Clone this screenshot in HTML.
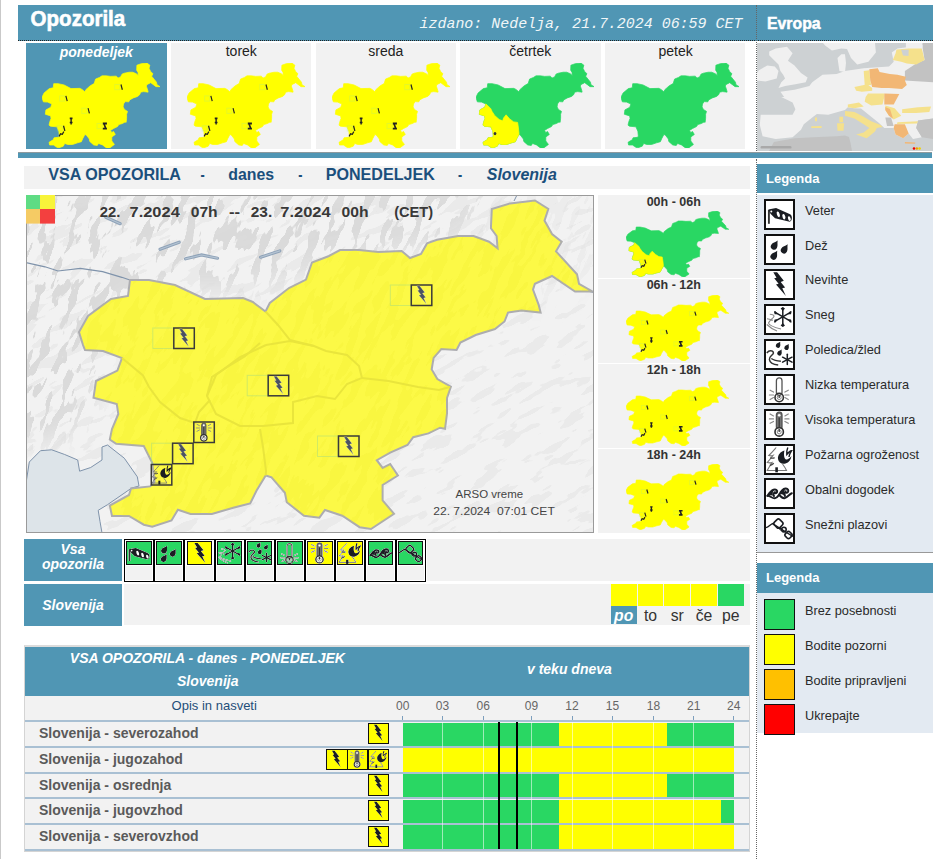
<!DOCTYPE html><html><head><meta charset="utf-8"><style>
*{margin:0;padding:0;box-sizing:border-box}
html,body{width:940px;height:859px;overflow:hidden;background:#fff;font-family:"Liberation Sans", sans-serif}
.abs{position:absolute}
.t{position:absolute;white-space:nowrap;line-height:1}
</style></head><body>
<svg width="0" height="0" style="position:absolute"><defs>
<symbol id="i_wind" viewBox="0 0 27 27"><path d="M2.9 9 L2.9 22.8" stroke="#333" stroke-width="1.9"/>
<path d="M2.3 8.6 L10.1 7.1 L23 12.8 C25.5 13.5 26.2 16 25.8 18 C25.4 20.2 24 20.9 22.6 20.6 L9 17.2 L4.5 12.7 Z" fill="#1a1d22"/>
<ellipse cx="12.3" cy="13.4" rx="1.4" ry="3" fill="#fff" transform="rotate(-18 12.3 13.4)"/>
<ellipse cx="17.9" cy="15.7" rx="1.4" ry="2.8" fill="#fff" transform="rotate(-18 17.9 15.7)"/>
<ellipse cx="23.3" cy="17.6" rx="1.3" ry="2.4" fill="#fff" transform="rotate(-18 23.3 17.4)"/>
<circle cx="5.3" cy="10.4" r="1" fill="#fff"/></symbol>
<symbol id="i_rain" viewBox="0 0 27 27"><path d="M0 -7 C1.12 -3.85 3.2 -2.88 3.2 0 A3.2 3.2 0 1 1 -3.2 0 C-3.2 -2.88 -1.12 -3.85 0 -7 Z" transform="translate(8 10.5) rotate(32)" fill="#1a1d22"/><path d="M0 -7 C1.12 -3.85 3.2 -2.88 3.2 0 A3.2 3.2 0 1 1 -3.2 0 C-3.2 -2.88 -1.12 -3.85 0 -7 Z" transform="translate(18 14.3) rotate(32)" fill="#1a1d22"/><path d="M0 -7 C1.12 -3.85 3.2 -2.88 3.2 0 A3.2 3.2 0 1 1 -3.2 0 C-3.2 -2.88 -1.12 -3.85 0 -7 Z" transform="translate(7.6 20.6) rotate(32)" fill="#1a1d22"/></symbol>
<symbol id="i_bolt" viewBox="0 0 27 27"><path d="M7.3 1.2 L11.1 1.2 L17.8 9.8 L14.7 10.9 L19.1 16.5 L16.3 17.2 L19.9 24.9 L10 13.6 L12.6 12.8 L8.2 7.3 L10.5 6.7 Z" fill="#1a1d22"/></symbol>
<symbol id="i_snow" viewBox="0 0 27 27"><g stroke="#1a1d22" stroke-width="1.5" stroke-linecap="round"><line x1="16.8" y1="2.2" x2="16.8" y2="19.8"/><line x1="9.2" y1="6.4" x2="24.4" y2="15.2"/><line x1="9.2" y1="15.2" x2="24.4" y2="6.4"/></g>
<g fill="#1a1d22"><path d="M14.6 2.6 L16.8 1 L19 2.6 L16.8 5 Z"/><path d="M14.6 19.4 L16.8 21 L19 19.4 L16.8 17 Z"/>
<path d="M8 5.2 L8.6 8.2 L11.6 8.3 L9.6 5.2 Z"/><path d="M25.6 5.2 L25 8.2 L22 8.3 L24 5.2 Z"/><path d="M8 16.4 L8.6 13.4 L11.6 13.3 L9.6 16.4 Z"/><path d="M25.6 16.4 L25 13.4 L22 13.3 L24 16.4 Z"/></g>
<path d="M3.8 8.3 C6 8.5 8 9.3 8 10.3 C7.5 12 4 14 2.5 17 C3 19.5 7 21 15 23 M1 12.8 C3 13 5 13.6 7 14.2 M0.8 18.5 C4 21.5 8 24 11 25" stroke="#8a8a8a" stroke-width="1.1" fill="none"/></symbol>
<symbol id="i_ice" viewBox="0 0 27 27"><path d="M0 -4.5 C0.77 -2.475 2.2 -1.98 2.2 0 A2.2 2.2 0 1 1 -2.2 0 C-2.2 -1.98 -0.77 -2.475 0 -4.5 Z" transform="translate(12 4.6) rotate(30)" fill="#1a1d22"/><path d="M0 -4.5 C0.77 -2.475 2.2 -1.98 2.2 0 A2.2 2.2 0 1 1 -2.2 0 C-2.2 -1.98 -0.77 -2.475 0 -4.5 Z" transform="translate(20.5 6.8) rotate(30)" fill="#1a1d22"/><path d="M0 -4.5 C0.77 -2.475 2.2 -1.98 2.2 0 A2.2 2.2 0 1 1 -2.2 0 C-2.2 -1.98 -0.77 -2.475 0 -4.5 Z" transform="translate(13.4 12.4) rotate(30)" fill="#1a1d22"/>
<path d="M0.8 12 C2 10.5 3.5 9.7 4.8 9.8 C7.5 10 8 12 6.8 13.2 C5 15 3 16 3.4 18.5 C3.8 22 8 23.6 12.2 24 M5.3 17.5 C8 19.5 11 20 14.9 20.2" stroke="#333" stroke-width="1.5" fill="none"/>
<g stroke="#1a1d22" stroke-width="1.5" stroke-linecap="round"><line x1="21.3" y1="13.3" x2="21.3" y2="23.6"/><line x1="16.6" y1="16.2" x2="26" y2="21.2"/><line x1="16.6" y1="21.2" x2="26" y2="16.2"/></g></symbol>
<symbol id="i_tlow" viewBox="0 0 27 27"><rect x="10.4" y="1.9" width="5.6" height="17.5" rx="2.8" fill="none" stroke="#555" stroke-width="1.3"/>
<circle cx="13.2" cy="21.5" r="4.2" fill="none" stroke="#333" stroke-width="1.6"/><circle cx="13.2" cy="21.5" r="2" fill="none" stroke="#888" stroke-width="1"/><rect x="12.6" y="19" width="1.2" height="3" fill="#333"/>
<g stroke="#8a8a8a" stroke-width="1.2" stroke-linecap="round"><line x1="4.1" y1="14.2" x2="7.5" y2="16.1"/><line x1="3.4" y1="19" x2="7.5" y2="19"/><line x1="4.1" y1="23.5" x2="7.5" y2="21.6"/><line x1="22.3" y1="14.2" x2="18.9" y2="16.1"/><line x1="23" y1="19" x2="18.9" y2="19"/><line x1="22.3" y1="23.5" x2="18.9" y2="21.6"/></g></symbol>
<symbol id="i_thigh" viewBox="0 0 27 27"><rect x="10.4" y="1.2" width="5.6" height="17.5" rx="2.8" fill="#777" stroke="#555" stroke-width="1.3"/><circle cx="13.2" cy="4.2" r="1.3" fill="#fff"/><rect x="12.6" y="6.5" width="1.2" height="12" fill="#333"/>
<circle cx="13.2" cy="20.9" r="4.2" fill="#fff" stroke="#333" stroke-width="1.6"/><circle cx="13.2" cy="20.9" r="2" fill="none" stroke="#888" stroke-width="1"/><rect x="12.6" y="18" width="1.2" height="3" fill="#333"/>
<g stroke="#8a8a8a" stroke-width="1.2" stroke-linecap="round"><line x1="4.1" y1="3" x2="7.5" y2="4.9"/><line x1="3.4" y1="7.9" x2="7.5" y2="7.9"/><line x1="4.1" y1="12.3" x2="7.5" y2="10.5"/><line x1="22.3" y1="3" x2="18.9" y2="4.9"/><line x1="23" y1="7.9" x2="18.9" y2="7.9"/><line x1="22.3" y1="12.3" x2="18.9" y2="10.5"/></g></symbol>
<symbol id="i_fire" viewBox="0 0 27 27"><path d="M10.2 1.5 C8 4 5.5 7 2.8 9.5 C4.5 10 6 10 7 9.5 C5 12.5 3 14.5 1.2 16.5 C3 17 4.6 17 6 16.5 C4.5 19 2.8 21.5 1.2 24.5 L9.8 24.5 M11 24.5 L20.5 24.5 C19.5 22 18 20 16.5 18" stroke="#777" stroke-width="1.1" fill="none"/>
<path d="M4 11.8 C5.5 12.3 7 12.5 8.6 11.6 M3.8 19.5 C5 19.2 6.5 18.5 7.8 17.2" stroke="#444" stroke-width="1.3" fill="none"/>
<rect x="9.3" y="21.3" width="2.6" height="5" fill="#1a1d22"/>
<path d="M18.5 4.5 C14.5 5.5 11.5 9 12 13 C12.5 16.5 16 18.5 19.5 17.5 C23 16.5 25 13.5 25.5 10 C23.5 12.5 21.5 14 20 13.5 C18 12.5 17.5 8 18.5 4.5 Z" fill="#1a1d22"/>
<path d="M21.8 1.5 C21 3.5 20.5 6 20.8 8.5 C22.5 6.5 24 5 25.5 4.8 C24 7 23 9 23 11" stroke="#1a1d22" stroke-width="1.4" fill="none"/></symbol>
<symbol id="i_coast" viewBox="0 0 27 27"><path d="M1.5 15.8 C3 13.5 4.8 10.8 7.5 9.8 C10 9 11.8 10.5 11 12.3 C10.4 13.5 8.8 13.4 8.7 12.3 C7.5 13 7 14.8 8 16 M13.2 14.6 C14.5 12 16.5 9 19.5 8.6 C22 8.3 23 10.8 21.8 12.2 C21 13 19.6 12.8 19.5 11.8 C18.4 12.8 18.2 14.6 19 16" stroke="#1a1d22" stroke-width="2" fill="none" stroke-linecap="round"/>
<path d="M1.5 15.8 C4 15.5 6 18.5 8.8 18.3 C11 18.1 12 16 13.2 14.6 C14.5 16.5 16 18.4 18.5 18.2 C21 18 23.5 14 25.8 13.2" stroke="#1a1d22" stroke-width="2" fill="none" stroke-linecap="round"/>
<path d="M2.5 15 C4 12.5 6 10.5 8 10.3 C7 11.5 6.5 13 6.8 15.5 Z M14 13.8 C15.5 11 17.5 9.3 19.5 9.2 C18.5 10.5 17.8 12.5 18 15 Z" fill="#1a1d22"/></symbol>
<symbol id="i_aval" viewBox="0 0 27 27"><path d="M0 12.7 C2.5 12 4.5 9.5 6.4 8.6 L26.9 21.5" stroke="#1a1d22" stroke-width="1.4" fill="none"/>
<rect x="8.6" y="4.8" width="7.6" height="7.6" rx="2" transform="rotate(45 12.4 8.6)" fill="none" stroke="#1a1d22" stroke-width="1.6"/>
<circle cx="17.9" cy="14.6" r="2.3" fill="none" stroke="#1a1d22" stroke-width="1.6"/>
<circle cx="14.7" cy="14.1" r="1" fill="none" stroke="#1a1d22" stroke-width="1"/>
<rect x="19.4" y="16.9" width="6.2" height="6.2" rx="2" transform="rotate(45 22.5 20)" fill="none" stroke="#1a1d22" stroke-width="1.6"/></symbol>
<symbol id="i_boltm" viewBox="0 0 27 27"><path d="M7.3 1.2 L11.1 1.2 L17.8 9.8 L14.7 10.9 L19.1 16.5 L16.3 17.2 L19.9 24.9 L10 13.6 L12.6 12.8 L8.2 7.3 L10.5 6.7 Z" fill="#4b5262" stroke="#fff" stroke-width="0.6" stroke-opacity="0.5"/></symbol>
</defs></svg>
<div class="abs" style="left:0;top:0;width:1px;height:859px;background:#c9c9c9"></div>
<div class="abs" style="left:18px;top:5px;width:915px;height:36px;background:#5096b4;border-bottom:1px dotted #222"></div>
<div class="abs" style="left:756px;top:5px;width:1px;height:146px;border-left:1px dotted #666"></div>
<div class="abs" style="left:756px;top:159px;width:1px;height:700px;border-left:1px dotted #666"></div>
<div class="abs" style="left:26px;top:43px;width:140.6px;height:106px;background:#5096b4"></div>
<div class="t" style="left:26px;top:45px;width:140.6px;text-align:center;font-size:14px;font-weight:bold;font-style:italic;color:#fff">ponedeljek</div>
<svg class="abs" style="left:42px;top:62.6px;width:118px;height:85.4px" viewBox="79 200.5 513.3 328.5" preserveAspectRatio="none"><path d="M130.0 280.0 L149.0 280.0 L175.0 285.0 L205.0 299.0 L243.0 298.0 L252.8 302.0 L265.5 311.5 L269.8 303.0 L289.0 288.0 L306.0 279.6 L312.0 262.5 L329.0 256.0 L340.0 250.0 L359.0 250.0 L378.0 252.0 L401.7 251.0 L410.0 258.0 L421.0 254.0 L427.0 243.4 L437.0 239.8 L458.3 236.0 L473.6 236.0 L489.0 241.7 L497.6 248.4 L496.6 236.0 L490.9 228.3 L491.8 209.0 L510.0 203.4 L534.9 200.5 L548.3 209.0 L544.5 220.6 L552.0 234.0 L561.7 241.7 L556.0 251.3 L577.0 274.3 L579.0 283.8 L592.3 291.5 L575.0 291.5 L552.0 276.0 L534.9 283.8 L533.0 289.6 L538.7 304.9 L540.6 312.6 L521.5 310.6 L508.0 312.6 L504.5 321.5 L495.0 329.0 L475.7 335.0 L460.4 342.6 L456.6 350.0 L441.3 349.0 L433.6 357.9 L431.7 369.4 L437.4 379.0 L450.9 386.6 L447.0 398.0 L447.0 413.4 L445.0 428.7 L440.0 427.7 L428.5 433.4 L413.2 437.2 L407.5 445.0 L390.2 452.6 L376.8 460.2 L382.6 467.9 L390.2 464.0 L397.9 475.5 L382.6 485.0 L382.6 500.4 L394.0 513.8 L371.0 529.0 L359.6 527.2 L342.3 515.7 L325.0 510.0 L319.4 517.7 L304.0 515.7 L286.8 502.3 L284.9 492.8 L271.5 477.4 L265.7 475.5 L256.6 490.6 L250.2 503.4 L233.2 507.7 L211.9 514.0 L190.6 514.0 L177.9 509.8 L171.5 520.4 L152.3 526.8 L143.8 524.7 L129.0 516.0 L112.0 516.0 L109.8 505.5 L129.0 495.0 L131.0 488.5 L150.2 486.4 L154.5 482.0 L152.3 463.0 L143.8 446.0 L116.2 443.8 L109.8 439.6 L112.0 429.0 L118.3 414.0 L116.8 404.0 L93.5 397.7 L96.0 381.0 L117.4 370.6 L122.0 358.0 L103.0 351.0 L85.0 350.0 L83.0 345.0 L79.0 332.0 L88.0 316.0 L111.0 299.0 L128.0 296.0 Z" fill="#ffff00" stroke="#ffff00" stroke-width="3"/><path d="M182.7 327 L188.7 347" stroke="#222" stroke-width="5.21739"/><rect x="155.7" y="327" width="22" height="20" fill="none" stroke="#a8e880" stroke-width="4" opacity="0.3"/><path d="M279.3 374.3 L285.3 394.3" stroke="#222" stroke-width="5.21739"/><rect x="252.3" y="374.3" width="22" height="20" fill="none" stroke="#a8e880" stroke-width="4" opacity="0.3"/><path d="M422.5 283.2 L428.5 303.2" stroke="#222" stroke-width="5.21739"/><rect x="395.5" y="283.2" width="22" height="20" fill="none" stroke="#a8e880" stroke-width="4" opacity="0.3"/><path d="M199.7 413.5 L211.7 413.5 M205.7 413.5 L205.7 437.5 M199.7 429.5 L211.7 429.5" stroke="#222" stroke-width="6.08696"/><path d="M172.6 442 L178.6 462" stroke="#222" stroke-width="5.21739"/><rect x="145.6" y="442" width="22" height="20" fill="none" stroke="#a8e880" stroke-width="4" opacity="0.3"/><path d="M153.6 482.8 L159.6 472.8 L167.6 474.8 L173.6 464.8" stroke="#222" fill="none" stroke-width="5.21739"/><path d="M343.4 433.2 L361.4 433.2 M343.4 453.2 L361.4 453.2 M348.4 433.2 L356.4 453.2" stroke="#222" stroke-width="6.95652"/><rect x="318.4" y="433.2" width="22" height="20" fill="none" stroke="#a8e880" stroke-width="4" opacity="0.3"/></svg>
<div class="abs" style="left:171px;top:43px;width:140.3px;height:106px;background:#f2f2f2"></div>
<div class="t" style="left:171px;top:44px;width:140.6px;text-align:center;font-size:14px;color:#222">torek</div>
<svg class="abs" style="left:187px;top:62.6px;width:118px;height:85.4px" viewBox="79 200.5 513.3 328.5" preserveAspectRatio="none"><path d="M130.0 280.0 L149.0 280.0 L175.0 285.0 L205.0 299.0 L243.0 298.0 L252.8 302.0 L265.5 311.5 L269.8 303.0 L289.0 288.0 L306.0 279.6 L312.0 262.5 L329.0 256.0 L340.0 250.0 L359.0 250.0 L378.0 252.0 L401.7 251.0 L410.0 258.0 L421.0 254.0 L427.0 243.4 L437.0 239.8 L458.3 236.0 L473.6 236.0 L489.0 241.7 L497.6 248.4 L496.6 236.0 L490.9 228.3 L491.8 209.0 L510.0 203.4 L534.9 200.5 L548.3 209.0 L544.5 220.6 L552.0 234.0 L561.7 241.7 L556.0 251.3 L577.0 274.3 L579.0 283.8 L592.3 291.5 L575.0 291.5 L552.0 276.0 L534.9 283.8 L533.0 289.6 L538.7 304.9 L540.6 312.6 L521.5 310.6 L508.0 312.6 L504.5 321.5 L495.0 329.0 L475.7 335.0 L460.4 342.6 L456.6 350.0 L441.3 349.0 L433.6 357.9 L431.7 369.4 L437.4 379.0 L450.9 386.6 L447.0 398.0 L447.0 413.4 L445.0 428.7 L440.0 427.7 L428.5 433.4 L413.2 437.2 L407.5 445.0 L390.2 452.6 L376.8 460.2 L382.6 467.9 L390.2 464.0 L397.9 475.5 L382.6 485.0 L382.6 500.4 L394.0 513.8 L371.0 529.0 L359.6 527.2 L342.3 515.7 L325.0 510.0 L319.4 517.7 L304.0 515.7 L286.8 502.3 L284.9 492.8 L271.5 477.4 L265.7 475.5 L256.6 490.6 L250.2 503.4 L233.2 507.7 L211.9 514.0 L190.6 514.0 L177.9 509.8 L171.5 520.4 L152.3 526.8 L143.8 524.7 L129.0 516.0 L112.0 516.0 L109.8 505.5 L129.0 495.0 L131.0 488.5 L150.2 486.4 L154.5 482.0 L152.3 463.0 L143.8 446.0 L116.2 443.8 L109.8 439.6 L112.0 429.0 L118.3 414.0 L116.8 404.0 L93.5 397.7 L96.0 381.0 L117.4 370.6 L122.0 358.0 L103.0 351.0 L85.0 350.0 L83.0 345.0 L79.0 332.0 L88.0 316.0 L111.0 299.0 L128.0 296.0 Z" fill="#ffff00" stroke="#ffff00" stroke-width="3"/><path d="M182.7 327 L188.7 347" stroke="#222" stroke-width="5.21739"/><rect x="155.7" y="327" width="22" height="20" fill="none" stroke="#a8e880" stroke-width="4" opacity="0.3"/><path d="M279.3 374.3 L285.3 394.3" stroke="#222" stroke-width="5.21739"/><rect x="252.3" y="374.3" width="22" height="20" fill="none" stroke="#a8e880" stroke-width="4" opacity="0.3"/><path d="M422.5 283.2 L428.5 303.2" stroke="#222" stroke-width="5.21739"/><rect x="395.5" y="283.2" width="22" height="20" fill="none" stroke="#a8e880" stroke-width="4" opacity="0.3"/><path d="M199.7 413.5 L211.7 413.5 M205.7 413.5 L205.7 437.5 M199.7 429.5 L211.7 429.5" stroke="#222" stroke-width="6.08696"/><path d="M172.6 442 L178.6 462" stroke="#222" stroke-width="5.21739"/><rect x="145.6" y="442" width="22" height="20" fill="none" stroke="#a8e880" stroke-width="4" opacity="0.3"/><path d="M153.6 482.8 L159.6 472.8 L167.6 474.8 L173.6 464.8" stroke="#222" fill="none" stroke-width="5.21739"/><path d="M343.4 433.2 L361.4 433.2 M343.4 453.2 L361.4 453.2 M348.4 433.2 L356.4 453.2" stroke="#222" stroke-width="6.95652"/><rect x="318.4" y="433.2" width="22" height="20" fill="none" stroke="#a8e880" stroke-width="4" opacity="0.3"/></svg>
<div class="abs" style="left:315.5px;top:43px;width:140.5px;height:106px;background:#f2f2f2"></div>
<div class="t" style="left:315.5px;top:44px;width:140.6px;text-align:center;font-size:14px;color:#222">sreda</div>
<svg class="abs" style="left:331.5px;top:62.6px;width:118px;height:85.4px" viewBox="79 200.5 513.3 328.5" preserveAspectRatio="none"><path d="M130.0 280.0 L149.0 280.0 L175.0 285.0 L205.0 299.0 L243.0 298.0 L252.8 302.0 L265.5 311.5 L269.8 303.0 L289.0 288.0 L306.0 279.6 L312.0 262.5 L329.0 256.0 L340.0 250.0 L359.0 250.0 L378.0 252.0 L401.7 251.0 L410.0 258.0 L421.0 254.0 L427.0 243.4 L437.0 239.8 L458.3 236.0 L473.6 236.0 L489.0 241.7 L497.6 248.4 L496.6 236.0 L490.9 228.3 L491.8 209.0 L510.0 203.4 L534.9 200.5 L548.3 209.0 L544.5 220.6 L552.0 234.0 L561.7 241.7 L556.0 251.3 L577.0 274.3 L579.0 283.8 L592.3 291.5 L575.0 291.5 L552.0 276.0 L534.9 283.8 L533.0 289.6 L538.7 304.9 L540.6 312.6 L521.5 310.6 L508.0 312.6 L504.5 321.5 L495.0 329.0 L475.7 335.0 L460.4 342.6 L456.6 350.0 L441.3 349.0 L433.6 357.9 L431.7 369.4 L437.4 379.0 L450.9 386.6 L447.0 398.0 L447.0 413.4 L445.0 428.7 L440.0 427.7 L428.5 433.4 L413.2 437.2 L407.5 445.0 L390.2 452.6 L376.8 460.2 L382.6 467.9 L390.2 464.0 L397.9 475.5 L382.6 485.0 L382.6 500.4 L394.0 513.8 L371.0 529.0 L359.6 527.2 L342.3 515.7 L325.0 510.0 L319.4 517.7 L304.0 515.7 L286.8 502.3 L284.9 492.8 L271.5 477.4 L265.7 475.5 L256.6 490.6 L250.2 503.4 L233.2 507.7 L211.9 514.0 L190.6 514.0 L177.9 509.8 L171.5 520.4 L152.3 526.8 L143.8 524.7 L129.0 516.0 L112.0 516.0 L109.8 505.5 L129.0 495.0 L131.0 488.5 L150.2 486.4 L154.5 482.0 L152.3 463.0 L143.8 446.0 L116.2 443.8 L109.8 439.6 L112.0 429.0 L118.3 414.0 L116.8 404.0 L93.5 397.7 L96.0 381.0 L117.4 370.6 L122.0 358.0 L103.0 351.0 L85.0 350.0 L83.0 345.0 L79.0 332.0 L88.0 316.0 L111.0 299.0 L128.0 296.0 Z" fill="#ffff00" stroke="#ffff00" stroke-width="3"/><path d="M182.7 327 L188.7 347" stroke="#222" stroke-width="5.21739"/><rect x="155.7" y="327" width="22" height="20" fill="none" stroke="#a8e880" stroke-width="4" opacity="0.3"/><path d="M279.3 374.3 L285.3 394.3" stroke="#222" stroke-width="5.21739"/><rect x="252.3" y="374.3" width="22" height="20" fill="none" stroke="#a8e880" stroke-width="4" opacity="0.3"/><path d="M422.5 283.2 L428.5 303.2" stroke="#222" stroke-width="5.21739"/><rect x="395.5" y="283.2" width="22" height="20" fill="none" stroke="#a8e880" stroke-width="4" opacity="0.3"/><path d="M199.7 413.5 L211.7 413.5 M205.7 413.5 L205.7 437.5 M199.7 429.5 L211.7 429.5" stroke="#222" stroke-width="6.08696"/><path d="M172.6 442 L178.6 462" stroke="#222" stroke-width="5.21739"/><rect x="145.6" y="442" width="22" height="20" fill="none" stroke="#a8e880" stroke-width="4" opacity="0.3"/><path d="M153.6 482.8 L159.6 472.8 L167.6 474.8 L173.6 464.8" stroke="#222" fill="none" stroke-width="5.21739"/><path d="M343.4 433.2 L361.4 433.2 M343.4 453.2 L361.4 453.2 M348.4 433.2 L356.4 453.2" stroke="#222" stroke-width="6.95652"/><rect x="318.4" y="433.2" width="22" height="20" fill="none" stroke="#a8e880" stroke-width="4" opacity="0.3"/></svg>
<div class="abs" style="left:460px;top:43px;width:140.7px;height:106px;background:#f2f2f2"></div>
<div class="t" style="left:460px;top:44px;width:140.6px;text-align:center;font-size:14px;color:#222">četrtek</div>
<svg class="abs" style="left:476px;top:62.6px;width:118px;height:85.4px" viewBox="79 200.5 513.3 328.5" preserveAspectRatio="none"><path d="M130.0 280.0 L149.0 280.0 L175.0 285.0 L205.0 299.0 L243.0 298.0 L252.8 302.0 L265.5 311.5 L269.8 303.0 L289.0 288.0 L306.0 279.6 L312.0 262.5 L329.0 256.0 L340.0 250.0 L359.0 250.0 L378.0 252.0 L401.7 251.0 L410.0 258.0 L421.0 254.0 L427.0 243.4 L437.0 239.8 L458.3 236.0 L473.6 236.0 L489.0 241.7 L497.6 248.4 L496.6 236.0 L490.9 228.3 L491.8 209.0 L510.0 203.4 L534.9 200.5 L548.3 209.0 L544.5 220.6 L552.0 234.0 L561.7 241.7 L556.0 251.3 L577.0 274.3 L579.0 283.8 L592.3 291.5 L575.0 291.5 L552.0 276.0 L534.9 283.8 L533.0 289.6 L538.7 304.9 L540.6 312.6 L521.5 310.6 L508.0 312.6 L504.5 321.5 L495.0 329.0 L475.7 335.0 L460.4 342.6 L456.6 350.0 L441.3 349.0 L433.6 357.9 L431.7 369.4 L437.4 379.0 L450.9 386.6 L447.0 398.0 L447.0 413.4 L445.0 428.7 L440.0 427.7 L428.5 433.4 L413.2 437.2 L407.5 445.0 L390.2 452.6 L376.8 460.2 L382.6 467.9 L390.2 464.0 L397.9 475.5 L382.6 485.0 L382.6 500.4 L394.0 513.8 L371.0 529.0 L359.6 527.2 L342.3 515.7 L325.0 510.0 L319.4 517.7 L304.0 515.7 L286.8 502.3 L284.9 492.8 L271.5 477.4 L265.7 475.5 L256.6 490.6 L250.2 503.4 L233.2 507.7 L211.9 514.0 L190.6 514.0 L177.9 509.8 L171.5 520.4 L152.3 526.8 L143.8 524.7 L129.0 516.0 L112.0 516.0 L109.8 505.5 L129.0 495.0 L131.0 488.5 L150.2 486.4 L154.5 482.0 L152.3 463.0 L143.8 446.0 L116.2 443.8 L109.8 439.6 L112.0 429.0 L118.3 414.0 L116.8 404.0 L93.5 397.7 L96.0 381.0 L117.4 370.6 L122.0 358.0 L103.0 351.0 L85.0 350.0 L83.0 345.0 L79.0 332.0 L88.0 316.0 L111.0 299.0 L128.0 296.0 Z" fill="#29d763" stroke="#29d763" stroke-width="3"/><path d="M122.0 358.0 L143.0 375.5 L149.0 387.0 L160.0 402.0 L180.0 418.0 L195.0 423.0 L199.0 412.0 L210.0 400.0 L225.5 415.7 L243.0 427.0 L260.0 429.0 L263.0 447.0 L266.0 471.0 L265.7 475.5 L256.6 490.6 L250.2 503.4 L233.2 507.7 L211.9 514.0 L190.6 514.0 L177.9 509.8 L171.5 520.4 L152.3 526.8 L143.8 524.7 L129.0 516.0 L112.0 516.0 L109.8 505.5 L129.0 495.0 L131.0 488.5 L150.2 486.4 L154.5 482.0 L152.3 463.0 L143.8 446.0 L116.2 443.8 L109.8 439.6 L112.0 429.0 L118.3 414.0 L116.8 404.0 L93.5 397.7 L96.0 381.0 L117.4 370.6 Z" fill="#ffff00" stroke="#ffff00" stroke-width="3"/><circle cx="161.7" cy="472" r="6" fill="#333"/></svg>
<div class="abs" style="left:605.3px;top:43px;width:139.8px;height:106px;background:#f2f2f2"></div>
<div class="t" style="left:605.3px;top:44px;width:140.6px;text-align:center;font-size:14px;color:#222">petek</div>
<svg class="abs" style="left:621.3px;top:62.6px;width:118px;height:85.4px" viewBox="79 200.5 513.3 328.5" preserveAspectRatio="none"><path d="M130.0 280.0 L149.0 280.0 L175.0 285.0 L205.0 299.0 L243.0 298.0 L252.8 302.0 L265.5 311.5 L269.8 303.0 L289.0 288.0 L306.0 279.6 L312.0 262.5 L329.0 256.0 L340.0 250.0 L359.0 250.0 L378.0 252.0 L401.7 251.0 L410.0 258.0 L421.0 254.0 L427.0 243.4 L437.0 239.8 L458.3 236.0 L473.6 236.0 L489.0 241.7 L497.6 248.4 L496.6 236.0 L490.9 228.3 L491.8 209.0 L510.0 203.4 L534.9 200.5 L548.3 209.0 L544.5 220.6 L552.0 234.0 L561.7 241.7 L556.0 251.3 L577.0 274.3 L579.0 283.8 L592.3 291.5 L575.0 291.5 L552.0 276.0 L534.9 283.8 L533.0 289.6 L538.7 304.9 L540.6 312.6 L521.5 310.6 L508.0 312.6 L504.5 321.5 L495.0 329.0 L475.7 335.0 L460.4 342.6 L456.6 350.0 L441.3 349.0 L433.6 357.9 L431.7 369.4 L437.4 379.0 L450.9 386.6 L447.0 398.0 L447.0 413.4 L445.0 428.7 L440.0 427.7 L428.5 433.4 L413.2 437.2 L407.5 445.0 L390.2 452.6 L376.8 460.2 L382.6 467.9 L390.2 464.0 L397.9 475.5 L382.6 485.0 L382.6 500.4 L394.0 513.8 L371.0 529.0 L359.6 527.2 L342.3 515.7 L325.0 510.0 L319.4 517.7 L304.0 515.7 L286.8 502.3 L284.9 492.8 L271.5 477.4 L265.7 475.5 L256.6 490.6 L250.2 503.4 L233.2 507.7 L211.9 514.0 L190.6 514.0 L177.9 509.8 L171.5 520.4 L152.3 526.8 L143.8 524.7 L129.0 516.0 L112.0 516.0 L109.8 505.5 L129.0 495.0 L131.0 488.5 L150.2 486.4 L154.5 482.0 L152.3 463.0 L143.8 446.0 L116.2 443.8 L109.8 439.6 L112.0 429.0 L118.3 414.0 L116.8 404.0 L93.5 397.7 L96.0 381.0 L117.4 370.6 L122.0 358.0 L103.0 351.0 L85.0 350.0 L83.0 345.0 L79.0 332.0 L88.0 316.0 L111.0 299.0 L128.0 296.0 Z" fill="#29d763" stroke="#29d763" stroke-width="3"/></svg>
<svg class="abs" style="left:757px;top:43px;width:176px;height:108px" viewBox="0 0 176 108"><defs><filter id="eblur" x="-5%" y="-5%" width="110%" height="110%"><feGaussianBlur stdDeviation="0.45"/></filter><clipPath id="eclip"><rect width="176" height="108"/></clipPath></defs><g clip-path="url(#eclip)"><g filter="url(#eblur)"><rect width="176" height="108" fill="#cdd1d3"/><path d="M66.0 0.0 L118.0 0.0 L118.9 9.4 L111.4 18.7 L100.2 21.5 L94.0 15.0 L90.0 6.0 L84.3 5.6 L74.9 7.5 L68.4 2.8 Z" fill="#f0f0f0"/><path d="M80.5 15.0 L84.3 11.2 L88.0 11.2 L89.0 20.0 L88.0 29.0 L82.4 28.1 Z" fill="#f0f0f0"/><path d="M148.9 0.0 L165.7 0.0 L164.8 5.6 L148.9 5.6 Z" fill="#f0f0f0"/><path d="M65.5 31.8 L79.6 30.9 L88.0 28.1 L106.7 25.3 L120.8 24.3 L132.0 23.4 L136.7 18.7 L134.8 9.4 L140.4 5.6 L153.5 3.7 L165.7 1.9 L176.0 0.0 L176.0 75.5 L161.0 77.4 L159.2 84.9 L164.8 94.3 L156.0 96.0 L151.7 90.5 L146.1 95.2 L138.6 91.5 L136.7 84.9 L127.3 84.9 L122.0 80.0 L112.0 72.0 L104.0 65.5 L97.4 65.2 L90.8 64.3 L88.0 67.1 L84.3 68.0 L71.2 71.8 L59.9 70.9 L56.2 73.7 L46.8 81.2 L44.0 86.8 L35.6 94.3 L18.7 96.1 L5.6 93.3 L2.8 82.1 L3.7 71.8 L26.2 71.8 L35.6 71.8 L38.4 66.2 L35.6 59.6 L24.3 54.0 L27.2 54.0 L23.4 48.7 L37.5 46.8 L52.4 43.1 L55.2 39.3 Z" fill="#f0f0f0"/><path d="M12.2 8.4 L18.7 5.6 L30.0 3.7 L35.6 10.3 L30.9 17.8 L37.5 22.5 L44.0 30.0 L50.6 34.6 L48.7 39.3 L38.4 41.2 L28.1 43.1 L21.5 44.9 L24.3 39.3 L28.1 35.6 L26.2 31.8 L23.4 28.1 L21.5 21.5 L16.9 16.9 L12.2 12.2 Z" fill="#f0f0f0"/><path d="M1.9 27.2 L10.3 22.5 L17.8 23.4 L21.5 28.1 L19.7 35.6 L8.4 38.4 L0.0 37.5 L0.0 30.0 Z" fill="#f0f0f0"/><path d="M12.0 108.0 L16.9 98.9 L37.5 95.2 L56.2 94.3 L79.6 93.3 L88.0 92.4 L92.0 94.0 L93.5 100.0 L95.0 108.0 Z" fill="#c2c2c2"/><path d="M165.7 0.0 L176.0 0.0 L176.0 39.3 L147.9 37.5 L147.9 28.1 L159.2 20.6 L167.6 16.9 L165.7 5.6 Z" fill="#c2c2c2"/><path d="M161.0 77.4 L176.0 75.5 L176.0 96.1 L164.8 94.3 L159.2 84.9 Z" fill="#c2c2c2"/><path d="M139.5 6.6 L151.7 5.6 L164.8 5.6 L167.6 16.9 L159.2 21.5 L149.8 20.6 L144.2 18.7 L135.8 16.9 L138.6 10.3 Z" fill="#f5e18c"/><path d="M144.2 6.8 L151.7 6.8 L151.5 13.1 L146.0 12.5 Z" fill="#cdd1d3"/><path d="M106.7 28.1 L112.3 27.2 L113.3 37.5 L114.2 42.1 L107.7 42.1 Z" fill="#f5e18c"/><path d="M112.3 26.2 L120.8 25.3 L122.6 29.0 L132.9 30.9 L140.4 31.8 L148.9 33.7 L147.9 37.5 L149.8 42.1 L145.1 45.9 L132.0 44.9 L124.5 44.9 L115.2 44.0 L113.3 37.5 Z" fill="#f2b774"/><path d="M97.4 44.0 L110.5 41.2 L115.2 44.9 L115.2 47.8 L104.9 48.7 L99.2 47.8 Z" fill="#f5e18c"/><path d="M108.6 54.0 L111.0 50.5 L127.3 50.5 L127.3 54.0 L125.5 61.5 L114.2 62.4 L107.7 58.7 Z" fill="#f5e18c"/><path d="M127.3 50.5 L142.3 51.0 L136.7 61.5 L127.3 61.5 Z" fill="#f2b774"/><path d="M90.8 61.5 L102.0 59.6 L106.7 63.4 L97.4 65.2 L90.8 64.3 Z" fill="#f5e18c"/><path d="M88.0 68.0 L97.4 69.0 L106.7 73.7 L114.2 78.3 L123.6 82.1 L125.5 84.0 L119.8 84.9 L118.0 88.6 L112.3 93.3 L109.5 95.2 L99.2 91.5 L106.7 89.6 L112.3 84.9 L106.7 81.2 L97.4 75.5 L88.0 72.7 Z" fill="#f5e18c"/><path d="M128.3 62.4 L137.6 65.2 L144.2 72.7 L136.7 76.5 L132.0 72.7 L128.3 67.1 Z" fill="#f5e18c"/><path d="M128.3 64.0 L133.0 66.0 L136.0 75.5 L132.0 72.7 L128.3 67.1 Z" fill="#f2b774"/><path d="M145.1 66.2 L161.0 64.3 L174.1 63.4 L172.3 69.0 L159.2 69.9 L145.1 69.9 Z" fill="#f5e18c"/><path d="M140.4 79.3 L161.0 78.3 L160.0 80.5 L140.0 81.0 Z" fill="#f5e18c"/><path d="M137.6 81.2 L147.9 81.2 L151.7 90.5 L146.1 95.2 L138.6 91.5 L136.7 84.9 Z" fill="#f2b774"/><path d="M128.3 74.6 L134.0 74.6 L136.7 83.0 L130.0 83.0 Z" fill="#c4c4c4"/><path d="M147.9 98.9 L158.2 99.5 L158.2 100.8 L147.9 100.5 Z" fill="#f2b774"/><path d="M82.4 73.7 L86.1 73.7 L86.1 79.3 L82.4 79.3 Z" fill="#f5e18c"/><path d="M80.0 80.2 L87.1 80.2 L86.5 87.7 L80.5 87.7 Z" fill="#f5e18c"/><path d="M54.3 83.3 L64.6 83.0 L64.6 84.9 L54.3 85.0 Z" fill="#f5e18c"/><path d="M58.0 74.6 L60.0 74.6 L60.0 78.3 L58.0 78.3 Z" fill="#f5e18c"/><rect x="3.5" y="103" width="31" height="2.6" rx="1.2" fill="#a9a9a9"/><circle cx="157" cy="105.5" r="1.3" fill="#e00"/><circle cx="159.8" cy="105.5" r="1.3" fill="#f0a000"/><circle cx="162.6" cy="105.5" r="1.3" fill="#f0d000"/></g></g></svg>
<div class="abs" style="left:18px;top:152px;width:914px;height:6px;background:#5096b4;border-top:1px solid #8e9a9e"></div>
<div class="abs" style="left:24px;top:165.5px;width:726px;height:23px;background:#f2f2f2"></div>
<svg class="abs" style="left:26px;top:195px;width:568px;height:338px" viewBox="26 195 568 338"><defs><filter id="terr1" color-interpolation-filters="sRGB" x="-50%" y="-50%" width="200%" height="200%"><feTurbulence type="fractalNoise" baseFrequency="0.11 0.035" numOctaves="3" seed="11"/><feColorMatrix type="matrix" values="0 0 0 0 0.855  0 0 0 0 0.855  0 0 0 0 0.855  0 0 0 -40 18.1"/></filter><filter id="terr2" color-interpolation-filters="sRGB" x="-50%" y="-50%" width="200%" height="200%"><feTurbulence type="fractalNoise" baseFrequency="0.03 0.11" numOctaves="3" seed="5"/><feColorMatrix type="matrix" values="0 0 0 0 0.87  0 0 0 0 0.87  0 0 0 0 0.87  0 0 0 -40 16.6"/></filter><filter id="mblur" x="-20%" y="-20%" width="140%" height="140%"><feGaussianBlur stdDeviation="14"/></filter><mask id="mk"><g filter="url(#mblur)"><path d="M0 180 L480 180 L470 230 L420 250 L340 262 L250 290 L150 292 L110 330 L90 420 L60 440 L0 450 Z" fill="#fff"/><path d="M440 180 L620 180 L620 260 L560 300 L470 300 Z" fill="#fff" fill-opacity="0.25"/></g></mask><clipPath id="mclip"><rect x="26" y="195" width="568" height="338"/></clipPath></defs><rect x="26" y="195" width="568" height="338" fill="#f2f2f2"/><g clip-path="url(#mclip)"><g mask="url(#mk)"><rect x="-100" y="0" width="900" height="700" filter="url(#terr1)" transform="rotate(22 310 364)"/></g><g opacity="0.35"><rect x="-100" y="0" width="900" height="700" filter="url(#terr2)" transform="rotate(-28 310 364)"/></g></g><path d="M26.5 480.0 L29.3 462.0 L40.5 450.7 L51.7 449.8 L64.7 454.5 L77.7 460.0 L79.6 471.2 L90.7 467.5 L102.0 460.0 L102.0 447.0 L107.5 445.0 L124.3 458.2 L137.3 476.8 L139.0 486.0 L131.7 488.0 L107.5 504.7 L98.2 510.3 L100.0 521.5 L102.0 533.0 L26.0 533.0 Z" fill="#dde4e9" stroke="#7f93ab" stroke-width="1"/><path d="M26 262.7 L45 266.8 L58 271 L80.3 268.4 L102.6 271.6 L121.8 277.3 L131.3 280.5" fill="none" stroke="#7f93ab" stroke-width="1.2"/><path d="M160.0 249.3 L179.2 242.2" fill="none" stroke="#8ea2b8" stroke-width="3.2" stroke-linecap="round"/><path d="M160.0 249.3 L179.2 242.2" fill="none" stroke="#b5c4d3" stroke-width="1.2" stroke-linecap="round"/><path d="M185.6 258.8 L201.5 255.0 L217.5 258.2" fill="none" stroke="#8ea2b8" stroke-width="3.2" stroke-linecap="round"/><path d="M185.6 258.8 L201.5 255.0 L217.5 258.2" fill="none" stroke="#b5c4d3" stroke-width="1.2" stroke-linecap="round"/><path d="M260.6 257.2 L279.8 250.9" fill="none" stroke="#8ea2b8" stroke-width="3.2" stroke-linecap="round"/><path d="M260.6 257.2 L279.8 250.9" fill="none" stroke="#b5c4d3" stroke-width="1.2" stroke-linecap="round"/><path d="M105.8 217.3 L120.2 223.7" fill="none" stroke="#8ea2b8" stroke-width="3.2" stroke-linecap="round"/><path d="M105.8 217.3 L120.2 223.7" fill="none" stroke="#b5c4d3" stroke-width="1.2" stroke-linecap="round"/><path d="M517 195 L514 201" fill="none" stroke="#7f93ab" stroke-width="1"/><path d="M587 291 L594 292.5" fill="none" stroke="#7f93ab" stroke-width="1"/><path d="M130.0 280.0 L149.0 280.0 L175.0 285.0 L205.0 299.0 L243.0 298.0 L252.8 302.0 L265.5 311.5 L269.8 303.0 L289.0 288.0 L306.0 279.6 L312.0 262.5 L329.0 256.0 L340.0 250.0 L359.0 250.0 L378.0 252.0 L401.7 251.0 L410.0 258.0 L421.0 254.0 L427.0 243.4 L437.0 239.8 L458.3 236.0 L473.6 236.0 L489.0 241.7 L497.6 248.4 L496.6 236.0 L490.9 228.3 L491.8 209.0 L510.0 203.4 L534.9 200.5 L548.3 209.0 L544.5 220.6 L552.0 234.0 L561.7 241.7 L556.0 251.3 L577.0 274.3 L579.0 283.8 L592.3 291.5 L575.0 291.5 L552.0 276.0 L534.9 283.8 L533.0 289.6 L538.7 304.9 L540.6 312.6 L521.5 310.6 L508.0 312.6 L504.5 321.5 L495.0 329.0 L475.7 335.0 L460.4 342.6 L456.6 350.0 L441.3 349.0 L433.6 357.9 L431.7 369.4 L437.4 379.0 L450.9 386.6 L447.0 398.0 L447.0 413.4 L445.0 428.7 L440.0 427.7 L428.5 433.4 L413.2 437.2 L407.5 445.0 L390.2 452.6 L376.8 460.2 L382.6 467.9 L390.2 464.0 L397.9 475.5 L382.6 485.0 L382.6 500.4 L394.0 513.8 L371.0 529.0 L359.6 527.2 L342.3 515.7 L325.0 510.0 L319.4 517.7 L304.0 515.7 L286.8 502.3 L284.9 492.8 L271.5 477.4 L265.7 475.5 L256.6 490.6 L250.2 503.4 L233.2 507.7 L211.9 514.0 L190.6 514.0 L177.9 509.8 L171.5 520.4 L152.3 526.8 L143.8 524.7 L129.0 516.0 L112.0 516.0 L109.8 505.5 L129.0 495.0 L131.0 488.5 L150.2 486.4 L154.5 482.0 L152.3 463.0 L143.8 446.0 L116.2 443.8 L109.8 439.6 L112.0 429.0 L118.3 414.0 L116.8 404.0 L93.5 397.7 L96.0 381.0 L117.4 370.6 L122.0 358.0 L103.0 351.0 L85.0 350.0 L83.0 345.0 L79.0 332.0 L88.0 316.0 L111.0 299.0 L128.0 296.0 Z" fill="#fcf946" stroke="#acacb0" stroke-width="2"/><defs><clipPath id="sclip"><path d="M130.0 280.0 L149.0 280.0 L175.0 285.0 L205.0 299.0 L243.0 298.0 L252.8 302.0 L265.5 311.5 L269.8 303.0 L289.0 288.0 L306.0 279.6 L312.0 262.5 L329.0 256.0 L340.0 250.0 L359.0 250.0 L378.0 252.0 L401.7 251.0 L410.0 258.0 L421.0 254.0 L427.0 243.4 L437.0 239.8 L458.3 236.0 L473.6 236.0 L489.0 241.7 L497.6 248.4 L496.6 236.0 L490.9 228.3 L491.8 209.0 L510.0 203.4 L534.9 200.5 L548.3 209.0 L544.5 220.6 L552.0 234.0 L561.7 241.7 L556.0 251.3 L577.0 274.3 L579.0 283.8 L592.3 291.5 L575.0 291.5 L552.0 276.0 L534.9 283.8 L533.0 289.6 L538.7 304.9 L540.6 312.6 L521.5 310.6 L508.0 312.6 L504.5 321.5 L495.0 329.0 L475.7 335.0 L460.4 342.6 L456.6 350.0 L441.3 349.0 L433.6 357.9 L431.7 369.4 L437.4 379.0 L450.9 386.6 L447.0 398.0 L447.0 413.4 L445.0 428.7 L440.0 427.7 L428.5 433.4 L413.2 437.2 L407.5 445.0 L390.2 452.6 L376.8 460.2 L382.6 467.9 L390.2 464.0 L397.9 475.5 L382.6 485.0 L382.6 500.4 L394.0 513.8 L371.0 529.0 L359.6 527.2 L342.3 515.7 L325.0 510.0 L319.4 517.7 L304.0 515.7 L286.8 502.3 L284.9 492.8 L271.5 477.4 L265.7 475.5 L256.6 490.6 L250.2 503.4 L233.2 507.7 L211.9 514.0 L190.6 514.0 L177.9 509.8 L171.5 520.4 L152.3 526.8 L143.8 524.7 L129.0 516.0 L112.0 516.0 L109.8 505.5 L129.0 495.0 L131.0 488.5 L150.2 486.4 L154.5 482.0 L152.3 463.0 L143.8 446.0 L116.2 443.8 L109.8 439.6 L112.0 429.0 L118.3 414.0 L116.8 404.0 L93.5 397.7 L96.0 381.0 L117.4 370.6 L122.0 358.0 L103.0 351.0 L85.0 350.0 L83.0 345.0 L79.0 332.0 L88.0 316.0 L111.0 299.0 L128.0 296.0 Z"/></clipPath><filter id="terr3" color-interpolation-filters="sRGB" x="-50%" y="-50%" width="200%" height="200%"><feTurbulence type="fractalNoise" baseFrequency="0.12 0.03" numOctaves="3" seed="21"/><feColorMatrix type="matrix" values="0 0 0 0 0.9  0 0 0 0 0.89  0 0 0 0 0.15  0 0 0 -40 19"/></filter></defs><g clip-path="url(#sclip)"><g opacity="0.15"><rect x="-100" y="0" width="900" height="700" filter="url(#terr3)" transform="rotate(30 310 364)"/></g></g><path d="M265.5 311.5 L278.0 325.0 L290.0 340.0 L314.0 346.0" fill="none" stroke="#e9e53c" stroke-width="2"/><path d="M266.0 345.0 L290.0 341.0 L314.0 346.0 L326.0 351.0 L347.0 355.0 L359.0 366.0 L362.0 378.0 L347.0 384.0 L335.0 399.0 L317.0 396.0 L293.0 402.0 L293.0 423.0 L263.0 426.0 L240.0 426.0 L216.0 414.0 L207.0 396.0 L216.0 375.0 L240.0 357.0 L266.0 345.0" fill="none" stroke="#e9e53c" stroke-width="2"/><path d="M362.0 378.0 L388.5 381.0 L418.0 387.0 L439.0 390.0 L450.0 387.0" fill="none" stroke="#e9e53c" stroke-width="2"/><path d="M122.0 358.0 L143.0 375.5 L149.0 387.0 L160.0 402.0 L180.0 418.0 L195.0 423.0 L199.0 412.0 L210.0 400.0" fill="none" stroke="#e9e53c" stroke-width="2"/><path d="M260.0 429.0 L263.0 447.0 L266.0 471.0 L265.7 475.5" fill="none" stroke="#e9e53c" stroke-width="2"/><path d="M207.0 396.0 L212.0 377.0 L229.0 366.0 L244.7 356.4 L260.0 343.0" fill="none" stroke="#e9e53c" stroke-width="2"/><rect x="26.5" y="195.5" width="567" height="337" fill="none" stroke="#9a9a9a" stroke-width="1"/><rect x="26" y="195" width="14" height="14" fill="#5fdc84"/><rect x="40" y="195" width="15" height="14" fill="#f8f43a"/><rect x="26" y="209" width="14" height="14.6" fill="#f5cb64"/><rect x="40" y="209" width="15" height="14.6" fill="#f3403f"/><rect x="152.8" y="328" width="20.5" height="20.5" fill="none" stroke="#a6dd80" stroke-width="0.9" stroke-opacity="0.55"/><rect x="173.8" y="328" width="20.5" height="20.5" fill="none" stroke="#3a3a3a" stroke-width="1.5"/><svg x="173.8" y="328" width="20.5" height="20.5" viewBox="0 0 27 27"><use href="#i_boltm"/></svg><rect x="390.3" y="285" width="20.5" height="20.5" fill="none" stroke="#a6dd80" stroke-width="0.9" stroke-opacity="0.55"/><rect x="411.3" y="285" width="20.5" height="20.5" fill="none" stroke="#3a3a3a" stroke-width="1.5"/><svg x="411.3" y="285" width="20.5" height="20.5" viewBox="0 0 27 27"><use href="#i_boltm"/></svg><rect x="247.2" y="375.3" width="20.5" height="20.5" fill="none" stroke="#a6dd80" stroke-width="0.9" stroke-opacity="0.55"/><rect x="268.2" y="375.3" width="20.5" height="20.5" fill="none" stroke="#3a3a3a" stroke-width="1.5"/><svg x="268.2" y="375.3" width="20.5" height="20.5" viewBox="0 0 27 27"><use href="#i_boltm"/></svg><rect x="317.5" y="436" width="20.5" height="20.5" fill="none" stroke="#a6dd80" stroke-width="0.9" stroke-opacity="0.55"/><rect x="338.5" y="436" width="20.5" height="20.5" fill="none" stroke="#3a3a3a" stroke-width="1.5"/><svg x="338.5" y="436" width="20.5" height="20.5" viewBox="0 0 27 27"><use href="#i_boltm"/></svg><rect x="193.8" y="422" width="20.5" height="20.5" fill="none" stroke="#3a3a3a" stroke-width="1.5"/><svg x="193.8" y="422" width="20.5" height="20.5" viewBox="0 0 27 27"><use href="#i_thigh"/></svg><rect x="151.6" y="443.2" width="20.5" height="20.5" fill="none" stroke="#a6dd80" stroke-width="0.9" stroke-opacity="0.55"/><rect x="172.6" y="443.2" width="20.5" height="20.5" fill="none" stroke="#3a3a3a" stroke-width="1.5"/><svg x="172.6" y="443.2" width="20.5" height="20.5" viewBox="0 0 27 27"><use href="#i_boltm"/></svg><rect x="151.3" y="464.5" width="20.5" height="20.5" fill="none" stroke="#3a3a3a" stroke-width="1.5"/><svg x="151.3" y="464.5" width="20.5" height="20.5" viewBox="0 0 27 27"><use href="#i_fire"/></svg></svg>
<div class="abs" style="left:597.5px;top:195px;width:152.5px;height:338px;background:#f2f2f2"></div>
<div class="t" style="left:597.5px;top:195.5px;width:152.5px;text-align:center;font-size:12.5px;font-weight:bold;color:#333">00h - 06h</div>
<svg class="abs" style="left:626px;top:210.6px;width:102.8px;height:66.1px" viewBox="79 200.5 513.3 328.5" preserveAspectRatio="none"><path d="M130.0 280.0 L149.0 280.0 L175.0 285.0 L205.0 299.0 L243.0 298.0 L252.8 302.0 L265.5 311.5 L269.8 303.0 L289.0 288.0 L306.0 279.6 L312.0 262.5 L329.0 256.0 L340.0 250.0 L359.0 250.0 L378.0 252.0 L401.7 251.0 L410.0 258.0 L421.0 254.0 L427.0 243.4 L437.0 239.8 L458.3 236.0 L473.6 236.0 L489.0 241.7 L497.6 248.4 L496.6 236.0 L490.9 228.3 L491.8 209.0 L510.0 203.4 L534.9 200.5 L548.3 209.0 L544.5 220.6 L552.0 234.0 L561.7 241.7 L556.0 251.3 L577.0 274.3 L579.0 283.8 L592.3 291.5 L575.0 291.5 L552.0 276.0 L534.9 283.8 L533.0 289.6 L538.7 304.9 L540.6 312.6 L521.5 310.6 L508.0 312.6 L504.5 321.5 L495.0 329.0 L475.7 335.0 L460.4 342.6 L456.6 350.0 L441.3 349.0 L433.6 357.9 L431.7 369.4 L437.4 379.0 L450.9 386.6 L447.0 398.0 L447.0 413.4 L445.0 428.7 L440.0 427.7 L428.5 433.4 L413.2 437.2 L407.5 445.0 L390.2 452.6 L376.8 460.2 L382.6 467.9 L390.2 464.0 L397.9 475.5 L382.6 485.0 L382.6 500.4 L394.0 513.8 L371.0 529.0 L359.6 527.2 L342.3 515.7 L325.0 510.0 L319.4 517.7 L304.0 515.7 L286.8 502.3 L284.9 492.8 L271.5 477.4 L265.7 475.5 L256.6 490.6 L250.2 503.4 L233.2 507.7 L211.9 514.0 L190.6 514.0 L177.9 509.8 L171.5 520.4 L152.3 526.8 L143.8 524.7 L129.0 516.0 L112.0 516.0 L109.8 505.5 L129.0 495.0 L131.0 488.5 L150.2 486.4 L154.5 482.0 L152.3 463.0 L143.8 446.0 L116.2 443.8 L109.8 439.6 L112.0 429.0 L118.3 414.0 L116.8 404.0 L93.5 397.7 L96.0 381.0 L117.4 370.6 L122.0 358.0 L103.0 351.0 L85.0 350.0 L83.0 345.0 L79.0 332.0 L88.0 316.0 L111.0 299.0 L128.0 296.0 Z" fill="#29d763" stroke="#29d763" stroke-width="3"/><path d="M122.0 358.0 L143.0 375.5 L149.0 387.0 L160.0 402.0 L180.0 418.0 L195.0 423.0 L199.0 412.0 L210.0 400.0 L225.5 415.7 L243.0 427.0 L260.0 429.0 L263.0 447.0 L266.0 471.0 L265.7 475.5 L256.6 490.6 L250.2 503.4 L233.2 507.7 L211.9 514.0 L190.6 514.0 L177.9 509.8 L171.5 520.4 L152.3 526.8 L143.8 524.7 L129.0 516.0 L112.0 516.0 L109.8 505.5 L129.0 495.0 L131.0 488.5 L150.2 486.4 L154.5 482.0 L152.3 463.0 L143.8 446.0 L116.2 443.8 L109.8 439.6 L112.0 429.0 L118.3 414.0 L116.8 404.0 L93.5 397.7 L96.0 381.0 L117.4 370.6 Z" fill="#ffff00" stroke="#ffff00" stroke-width="3"/><path d="M172.6 442 L178.6 462" stroke="#222" stroke-width="6"/><rect x="145.6" y="442" width="22" height="20" fill="none" stroke="#a8e880" stroke-width="4" opacity="0.3"/><path d="M153.6 482.8 L159.6 472.8 L167.6 474.8 L173.6 464.8" stroke="#222" fill="none" stroke-width="6"/></svg>
<div class="abs" style="left:597.5px;top:277.8px;width:152.5px;height:1.3px;background:#fff"></div>
<div class="t" style="left:597.5px;top:278.7px;width:152.5px;text-align:center;font-size:12.5px;font-weight:bold;color:#333">06h - 12h</div>
<svg class="abs" style="left:626px;top:295.2px;width:102.8px;height:66.1px" viewBox="79 200.5 513.3 328.5" preserveAspectRatio="none"><path d="M130.0 280.0 L149.0 280.0 L175.0 285.0 L205.0 299.0 L243.0 298.0 L252.8 302.0 L265.5 311.5 L269.8 303.0 L289.0 288.0 L306.0 279.6 L312.0 262.5 L329.0 256.0 L340.0 250.0 L359.0 250.0 L378.0 252.0 L401.7 251.0 L410.0 258.0 L421.0 254.0 L427.0 243.4 L437.0 239.8 L458.3 236.0 L473.6 236.0 L489.0 241.7 L497.6 248.4 L496.6 236.0 L490.9 228.3 L491.8 209.0 L510.0 203.4 L534.9 200.5 L548.3 209.0 L544.5 220.6 L552.0 234.0 L561.7 241.7 L556.0 251.3 L577.0 274.3 L579.0 283.8 L592.3 291.5 L575.0 291.5 L552.0 276.0 L534.9 283.8 L533.0 289.6 L538.7 304.9 L540.6 312.6 L521.5 310.6 L508.0 312.6 L504.5 321.5 L495.0 329.0 L475.7 335.0 L460.4 342.6 L456.6 350.0 L441.3 349.0 L433.6 357.9 L431.7 369.4 L437.4 379.0 L450.9 386.6 L447.0 398.0 L447.0 413.4 L445.0 428.7 L440.0 427.7 L428.5 433.4 L413.2 437.2 L407.5 445.0 L390.2 452.6 L376.8 460.2 L382.6 467.9 L390.2 464.0 L397.9 475.5 L382.6 485.0 L382.6 500.4 L394.0 513.8 L371.0 529.0 L359.6 527.2 L342.3 515.7 L325.0 510.0 L319.4 517.7 L304.0 515.7 L286.8 502.3 L284.9 492.8 L271.5 477.4 L265.7 475.5 L256.6 490.6 L250.2 503.4 L233.2 507.7 L211.9 514.0 L190.6 514.0 L177.9 509.8 L171.5 520.4 L152.3 526.8 L143.8 524.7 L129.0 516.0 L112.0 516.0 L109.8 505.5 L129.0 495.0 L131.0 488.5 L150.2 486.4 L154.5 482.0 L152.3 463.0 L143.8 446.0 L116.2 443.8 L109.8 439.6 L112.0 429.0 L118.3 414.0 L116.8 404.0 L93.5 397.7 L96.0 381.0 L117.4 370.6 L122.0 358.0 L103.0 351.0 L85.0 350.0 L83.0 345.0 L79.0 332.0 L88.0 316.0 L111.0 299.0 L128.0 296.0 Z" fill="#ffff00" stroke="#ffff00" stroke-width="3"/><path d="M182.7 327 L188.7 347" stroke="#222" stroke-width="6"/><rect x="155.7" y="327" width="22" height="20" fill="none" stroke="#a8e880" stroke-width="4" opacity="0.3"/><path d="M279.3 374.3 L285.3 394.3" stroke="#222" stroke-width="6"/><rect x="252.3" y="374.3" width="22" height="20" fill="none" stroke="#a8e880" stroke-width="4" opacity="0.3"/><path d="M422.5 283.2 L428.5 303.2" stroke="#222" stroke-width="6"/><rect x="395.5" y="283.2" width="22" height="20" fill="none" stroke="#a8e880" stroke-width="4" opacity="0.3"/><path d="M199.7 413.5 L211.7 413.5 M205.7 413.5 L205.7 437.5 M199.7 429.5 L211.7 429.5" stroke="#222" stroke-width="7"/><path d="M172.6 442 L178.6 462" stroke="#222" stroke-width="6"/><rect x="145.6" y="442" width="22" height="20" fill="none" stroke="#a8e880" stroke-width="4" opacity="0.3"/><path d="M153.6 482.8 L159.6 472.8 L167.6 474.8 L173.6 464.8" stroke="#222" fill="none" stroke-width="6"/><path d="M343.4 433.2 L361.4 433.2 M343.4 453.2 L361.4 453.2 M348.4 433.2 L356.4 453.2" stroke="#222" stroke-width="8"/><rect x="318.4" y="433.2" width="22" height="20" fill="none" stroke="#a8e880" stroke-width="4" opacity="0.3"/></svg>
<div class="abs" style="left:597.5px;top:362.8px;width:152.5px;height:1.3px;background:#fff"></div>
<div class="t" style="left:597.5px;top:363.7px;width:152.5px;text-align:center;font-size:12.5px;font-weight:bold;color:#333">12h - 18h</div>
<svg class="abs" style="left:626px;top:379.8px;width:102.8px;height:66.1px" viewBox="79 200.5 513.3 328.5" preserveAspectRatio="none"><path d="M130.0 280.0 L149.0 280.0 L175.0 285.0 L205.0 299.0 L243.0 298.0 L252.8 302.0 L265.5 311.5 L269.8 303.0 L289.0 288.0 L306.0 279.6 L312.0 262.5 L329.0 256.0 L340.0 250.0 L359.0 250.0 L378.0 252.0 L401.7 251.0 L410.0 258.0 L421.0 254.0 L427.0 243.4 L437.0 239.8 L458.3 236.0 L473.6 236.0 L489.0 241.7 L497.6 248.4 L496.6 236.0 L490.9 228.3 L491.8 209.0 L510.0 203.4 L534.9 200.5 L548.3 209.0 L544.5 220.6 L552.0 234.0 L561.7 241.7 L556.0 251.3 L577.0 274.3 L579.0 283.8 L592.3 291.5 L575.0 291.5 L552.0 276.0 L534.9 283.8 L533.0 289.6 L538.7 304.9 L540.6 312.6 L521.5 310.6 L508.0 312.6 L504.5 321.5 L495.0 329.0 L475.7 335.0 L460.4 342.6 L456.6 350.0 L441.3 349.0 L433.6 357.9 L431.7 369.4 L437.4 379.0 L450.9 386.6 L447.0 398.0 L447.0 413.4 L445.0 428.7 L440.0 427.7 L428.5 433.4 L413.2 437.2 L407.5 445.0 L390.2 452.6 L376.8 460.2 L382.6 467.9 L390.2 464.0 L397.9 475.5 L382.6 485.0 L382.6 500.4 L394.0 513.8 L371.0 529.0 L359.6 527.2 L342.3 515.7 L325.0 510.0 L319.4 517.7 L304.0 515.7 L286.8 502.3 L284.9 492.8 L271.5 477.4 L265.7 475.5 L256.6 490.6 L250.2 503.4 L233.2 507.7 L211.9 514.0 L190.6 514.0 L177.9 509.8 L171.5 520.4 L152.3 526.8 L143.8 524.7 L129.0 516.0 L112.0 516.0 L109.8 505.5 L129.0 495.0 L131.0 488.5 L150.2 486.4 L154.5 482.0 L152.3 463.0 L143.8 446.0 L116.2 443.8 L109.8 439.6 L112.0 429.0 L118.3 414.0 L116.8 404.0 L93.5 397.7 L96.0 381.0 L117.4 370.6 L122.0 358.0 L103.0 351.0 L85.0 350.0 L83.0 345.0 L79.0 332.0 L88.0 316.0 L111.0 299.0 L128.0 296.0 Z" fill="#ffff00" stroke="#ffff00" stroke-width="3"/><path d="M182.7 327 L188.7 347" stroke="#222" stroke-width="6"/><rect x="155.7" y="327" width="22" height="20" fill="none" stroke="#a8e880" stroke-width="4" opacity="0.3"/><path d="M279.3 374.3 L285.3 394.3" stroke="#222" stroke-width="6"/><rect x="252.3" y="374.3" width="22" height="20" fill="none" stroke="#a8e880" stroke-width="4" opacity="0.3"/><path d="M422.5 283.2 L428.5 303.2" stroke="#222" stroke-width="6"/><rect x="395.5" y="283.2" width="22" height="20" fill="none" stroke="#a8e880" stroke-width="4" opacity="0.3"/><path d="M199.7 413.5 L211.7 413.5 M205.7 413.5 L205.7 437.5 M199.7 429.5 L211.7 429.5" stroke="#222" stroke-width="7"/><path d="M172.6 442 L178.6 462" stroke="#222" stroke-width="6"/><rect x="145.6" y="442" width="22" height="20" fill="none" stroke="#a8e880" stroke-width="4" opacity="0.3"/><path d="M153.6 482.8 L159.6 472.8 L167.6 474.8 L173.6 464.8" stroke="#222" fill="none" stroke-width="6"/><path d="M343.4 433.2 L361.4 433.2 M343.4 453.2 L361.4 453.2 M348.4 433.2 L356.4 453.2" stroke="#222" stroke-width="8"/><rect x="318.4" y="433.2" width="22" height="20" fill="none" stroke="#a8e880" stroke-width="4" opacity="0.3"/></svg>
<div class="abs" style="left:597.5px;top:447.8px;width:152.5px;height:1.3px;background:#fff"></div>
<div class="t" style="left:597.5px;top:448.7px;width:152.5px;text-align:center;font-size:12.5px;font-weight:bold;color:#333">18h - 24h</div>
<svg class="abs" style="left:626px;top:464.4px;width:102.8px;height:66.1px" viewBox="79 200.5 513.3 328.5" preserveAspectRatio="none"><path d="M130.0 280.0 L149.0 280.0 L175.0 285.0 L205.0 299.0 L243.0 298.0 L252.8 302.0 L265.5 311.5 L269.8 303.0 L289.0 288.0 L306.0 279.6 L312.0 262.5 L329.0 256.0 L340.0 250.0 L359.0 250.0 L378.0 252.0 L401.7 251.0 L410.0 258.0 L421.0 254.0 L427.0 243.4 L437.0 239.8 L458.3 236.0 L473.6 236.0 L489.0 241.7 L497.6 248.4 L496.6 236.0 L490.9 228.3 L491.8 209.0 L510.0 203.4 L534.9 200.5 L548.3 209.0 L544.5 220.6 L552.0 234.0 L561.7 241.7 L556.0 251.3 L577.0 274.3 L579.0 283.8 L592.3 291.5 L575.0 291.5 L552.0 276.0 L534.9 283.8 L533.0 289.6 L538.7 304.9 L540.6 312.6 L521.5 310.6 L508.0 312.6 L504.5 321.5 L495.0 329.0 L475.7 335.0 L460.4 342.6 L456.6 350.0 L441.3 349.0 L433.6 357.9 L431.7 369.4 L437.4 379.0 L450.9 386.6 L447.0 398.0 L447.0 413.4 L445.0 428.7 L440.0 427.7 L428.5 433.4 L413.2 437.2 L407.5 445.0 L390.2 452.6 L376.8 460.2 L382.6 467.9 L390.2 464.0 L397.9 475.5 L382.6 485.0 L382.6 500.4 L394.0 513.8 L371.0 529.0 L359.6 527.2 L342.3 515.7 L325.0 510.0 L319.4 517.7 L304.0 515.7 L286.8 502.3 L284.9 492.8 L271.5 477.4 L265.7 475.5 L256.6 490.6 L250.2 503.4 L233.2 507.7 L211.9 514.0 L190.6 514.0 L177.9 509.8 L171.5 520.4 L152.3 526.8 L143.8 524.7 L129.0 516.0 L112.0 516.0 L109.8 505.5 L129.0 495.0 L131.0 488.5 L150.2 486.4 L154.5 482.0 L152.3 463.0 L143.8 446.0 L116.2 443.8 L109.8 439.6 L112.0 429.0 L118.3 414.0 L116.8 404.0 L93.5 397.7 L96.0 381.0 L117.4 370.6 L122.0 358.0 L103.0 351.0 L85.0 350.0 L83.0 345.0 L79.0 332.0 L88.0 316.0 L111.0 299.0 L128.0 296.0 Z" fill="#ffff00" stroke="#ffff00" stroke-width="3"/><path d="M182.7 327 L188.7 347" stroke="#222" stroke-width="6"/><rect x="155.7" y="327" width="22" height="20" fill="none" stroke="#a8e880" stroke-width="4" opacity="0.3"/><path d="M279.3 374.3 L285.3 394.3" stroke="#222" stroke-width="6"/><rect x="252.3" y="374.3" width="22" height="20" fill="none" stroke="#a8e880" stroke-width="4" opacity="0.3"/><path d="M422.5 283.2 L428.5 303.2" stroke="#222" stroke-width="6"/><rect x="395.5" y="283.2" width="22" height="20" fill="none" stroke="#a8e880" stroke-width="4" opacity="0.3"/><path d="M199.7 413.5 L211.7 413.5 M205.7 413.5 L205.7 437.5 M199.7 429.5 L211.7 429.5" stroke="#222" stroke-width="7"/><path d="M172.6 442 L178.6 462" stroke="#222" stroke-width="6"/><rect x="145.6" y="442" width="22" height="20" fill="none" stroke="#a8e880" stroke-width="4" opacity="0.3"/><path d="M153.6 482.8 L159.6 472.8 L167.6 474.8 L173.6 464.8" stroke="#222" fill="none" stroke-width="6"/><path d="M343.4 433.2 L361.4 433.2 M343.4 453.2 L361.4 453.2 M348.4 433.2 L356.4 453.2" stroke="#222" stroke-width="8"/><rect x="318.4" y="433.2" width="22" height="20" fill="none" stroke="#a8e880" stroke-width="4" opacity="0.3"/></svg>
<div class="abs" style="left:757px;top:164px;width:176px;height:29px;background:#5096b4"></div>
<div class="t" style="left:766px;top:172px;font-size:13px;font-weight:bold;color:#fff">Legenda</div>
<div class="abs" style="left:757px;top:195px;width:176px;height:358px;background:#e3eaf2;border-bottom:1px solid #999"></div>
<div class="abs" style="left:764px;top:199.10px;width:31px;height:31px;background:#fff;border:2px solid #111"><svg width="27" height="27" style="display:block"><use href="#i_wind"/></svg></div>
<div class="t" style="left:805px;top:204.6px;font-size:12.75px;color:#2a2a2a">Veter</div>
<div class="abs" style="left:764px;top:234.02px;width:31px;height:31px;background:#fff;border:2px solid #111"><svg width="27" height="27" style="display:block"><use href="#i_rain"/></svg></div>
<div class="t" style="left:805px;top:239.52px;font-size:12.75px;color:#2a2a2a">Dež</div>
<div class="abs" style="left:764px;top:268.94px;width:31px;height:31px;background:#fff;border:2px solid #111"><svg width="27" height="27" style="display:block"><use href="#i_bolt"/></svg></div>
<div class="t" style="left:805px;top:274.44px;font-size:12.75px;color:#2a2a2a">Nevihte</div>
<div class="abs" style="left:764px;top:303.86px;width:31px;height:31px;background:#fff;border:2px solid #111"><svg width="27" height="27" style="display:block"><use href="#i_snow"/></svg></div>
<div class="t" style="left:805px;top:309.36px;font-size:12.75px;color:#2a2a2a">Sneg</div>
<div class="abs" style="left:764px;top:338.78px;width:31px;height:31px;background:#fff;border:2px solid #111"><svg width="27" height="27" style="display:block"><use href="#i_ice"/></svg></div>
<div class="t" style="left:805px;top:344.28px;font-size:12.75px;color:#2a2a2a">Poledica/žled</div>
<div class="abs" style="left:764px;top:373.70px;width:31px;height:31px;background:#fff;border:2px solid #111"><svg width="27" height="27" style="display:block"><use href="#i_tlow"/></svg></div>
<div class="t" style="left:805px;top:379.2px;font-size:12.75px;color:#2a2a2a">Nizka temperatura</div>
<div class="abs" style="left:764px;top:408.62px;width:31px;height:31px;background:#fff;border:2px solid #111"><svg width="27" height="27" style="display:block"><use href="#i_thigh"/></svg></div>
<div class="t" style="left:805px;top:414.12px;font-size:12.75px;color:#2a2a2a">Visoka temperatura</div>
<div class="abs" style="left:764px;top:443.54px;width:31px;height:31px;background:#fff;border:2px solid #111"><svg width="27" height="27" style="display:block"><use href="#i_fire"/></svg></div>
<div class="t" style="left:805px;top:449.04px;font-size:12.75px;color:#2a2a2a">Požarna ogroženost</div>
<div class="abs" style="left:764px;top:478.46px;width:31px;height:31px;background:#fff;border:2px solid #111"><svg width="27" height="27" style="display:block"><use href="#i_coast"/></svg></div>
<div class="t" style="left:805px;top:483.96px;font-size:12.75px;color:#2a2a2a">Obalni dogodek</div>
<div class="abs" style="left:764px;top:513.38px;width:31px;height:31px;background:#fff;border:2px solid #111"><svg width="27" height="27" style="display:block"><use href="#i_aval"/></svg></div>
<div class="t" style="left:805px;top:518.88px;font-size:12.75px;color:#2a2a2a">Snežni plazovi</div>
<div class="abs" style="left:757px;top:563px;width:176px;height:30px;background:#5096b4"></div>
<div class="t" style="left:766px;top:571px;font-size:13px;font-weight:bold;color:#fff">Legenda</div>
<div class="abs" style="left:757px;top:593px;width:176px;height:140px;background:#e3eaf2"></div>
<div class="abs" style="left:764px;top:599px;width:31px;height:31px;background:#29d763;border:1px solid #111"></div>
<div class="t" style="left:805px;top:604.5px;font-size:12.75px;color:#2a2a2a">Brez posebnosti</div>
<div class="abs" style="left:764px;top:634px;width:31px;height:31px;background:#ffff00;border:1px solid #111"></div>
<div class="t" style="left:805px;top:639.5px;font-size:12.75px;color:#2a2a2a">Bodite pozorni</div>
<div class="abs" style="left:764px;top:669px;width:31px;height:31px;background:#ffc000;border:1px solid #111"></div>
<div class="t" style="left:805px;top:674.5px;font-size:12.75px;color:#2a2a2a">Bodite pripravljeni</div>
<div class="abs" style="left:764px;top:704px;width:31px;height:31px;background:#ff0000;border:1px solid #111"></div>
<div class="t" style="left:805px;top:709.5px;font-size:12.75px;color:#2a2a2a">Ukrepajte</div>
<div class="abs" style="left:24px;top:539px;width:98px;height:42px;background:#5096b4"></div>
<div class="t" style="left:24px;top:542px;width:98px;text-align:center;font-size:14px;font-weight:bold;font-style:italic;color:#fff;line-height:15px">Vsa<br>opozorila</div>
<div class="abs" style="left:427px;top:539px;width:323px;height:42px;background:#f2f2f2"></div>
<div class="abs" style="left:24px;top:584px;width:98px;height:41.5px;background:#5096b4"></div>
<div class="t" style="left:24px;top:598px;width:98px;text-align:center;font-size:14px;font-weight:bold;font-style:italic;color:#fff">Slovenija</div>
<div class="abs" style="left:124px;top:584px;width:626px;height:41px;background:#f2f2f2"></div>
<div class="abs" style="left:124px;top:539px;width:302px;height:42.5px;background:#000"></div>
<div class="abs" style="left:125px;top:540px;width:28.2px;height:40.5px;background:#fff"></div>
<div class="abs" style="left:126px;top:566px;width:26.2px;height:14px;background:#f2f2f2"></div>
<div class="abs" style="left:126.2px;top:540.5px;width:25.5px;height:24.5px;background:#29d763;border:1px solid #111"><svg width="23.5" height="22.5" viewBox="0 0 27 27" preserveAspectRatio="none" style="display:block;filter:drop-shadow(0 0 0.5px #fff) drop-shadow(0 0 0.3px #fff)"><use href="#i_wind"/></svg></div>
<div class="abs" style="left:155.17px;top:540px;width:28.2px;height:40.5px;background:#fff"></div>
<div class="abs" style="left:156.17px;top:566px;width:26.2px;height:14px;background:#f2f2f2"></div>
<div class="abs" style="left:156.37px;top:540.5px;width:25.5px;height:24.5px;background:#29d763;border:1px solid #111"><svg width="23.5" height="22.5" viewBox="0 0 27 27" preserveAspectRatio="none" style="display:block;filter:drop-shadow(0 0 0.5px #fff) drop-shadow(0 0 0.3px #fff)"><use href="#i_rain"/></svg></div>
<div class="abs" style="left:185.34px;top:540px;width:28.2px;height:40.5px;background:#fff"></div>
<div class="abs" style="left:186.34px;top:566px;width:26.2px;height:14px;background:#f2f2f2"></div>
<div class="abs" style="left:186.54px;top:540.5px;width:25.5px;height:24.5px;background:#ffff00;border:1px solid #111"><svg width="23.5" height="22.5" viewBox="0 0 27 27" preserveAspectRatio="none" style="display:block;filter:drop-shadow(0 0 0.5px #fff) drop-shadow(0 0 0.3px #fff)"><use href="#i_bolt"/></svg></div>
<div class="abs" style="left:215.51px;top:540px;width:28.2px;height:40.5px;background:#fff"></div>
<div class="abs" style="left:216.51px;top:566px;width:26.2px;height:14px;background:#f2f2f2"></div>
<div class="abs" style="left:216.71px;top:540.5px;width:25.5px;height:24.5px;background:#29d763;border:1px solid #111"><svg width="23.5" height="22.5" viewBox="0 0 27 27" preserveAspectRatio="none" style="display:block;filter:drop-shadow(0 0 0.5px #fff) drop-shadow(0 0 0.3px #fff)"><use href="#i_snow"/></svg></div>
<div class="abs" style="left:245.68px;top:540px;width:28.2px;height:40.5px;background:#fff"></div>
<div class="abs" style="left:246.68px;top:566px;width:26.2px;height:14px;background:#f2f2f2"></div>
<div class="abs" style="left:246.88px;top:540.5px;width:25.5px;height:24.5px;background:#29d763;border:1px solid #111"><svg width="23.5" height="22.5" viewBox="0 0 27 27" preserveAspectRatio="none" style="display:block;filter:drop-shadow(0 0 0.5px #fff) drop-shadow(0 0 0.3px #fff)"><use href="#i_ice"/></svg></div>
<div class="abs" style="left:275.85px;top:540px;width:28.2px;height:40.5px;background:#fff"></div>
<div class="abs" style="left:276.85px;top:566px;width:26.2px;height:14px;background:#f2f2f2"></div>
<div class="abs" style="left:277.05px;top:540.5px;width:25.5px;height:24.5px;background:#29d763;border:1px solid #111"><svg width="23.5" height="22.5" viewBox="0 0 27 27" preserveAspectRatio="none" style="display:block;filter:drop-shadow(0 0 0.5px #fff) drop-shadow(0 0 0.3px #fff)"><use href="#i_tlow"/></svg></div>
<div class="abs" style="left:306.02px;top:540px;width:28.2px;height:40.5px;background:#fff"></div>
<div class="abs" style="left:307.02px;top:566px;width:26.2px;height:14px;background:#f2f2f2"></div>
<div class="abs" style="left:307.22px;top:540.5px;width:25.5px;height:24.5px;background:#ffff00;border:1px solid #111"><svg width="23.5" height="22.5" viewBox="0 0 27 27" preserveAspectRatio="none" style="display:block;filter:drop-shadow(0 0 0.5px #fff) drop-shadow(0 0 0.3px #fff)"><use href="#i_thigh"/></svg></div>
<div class="abs" style="left:336.19px;top:540px;width:28.2px;height:40.5px;background:#fff"></div>
<div class="abs" style="left:337.19px;top:566px;width:26.2px;height:14px;background:#f2f2f2"></div>
<div class="abs" style="left:337.39px;top:540.5px;width:25.5px;height:24.5px;background:#ffff00;border:1px solid #111"><svg width="23.5" height="22.5" viewBox="0 0 27 27" preserveAspectRatio="none" style="display:block;filter:drop-shadow(0 0 0.5px #fff) drop-shadow(0 0 0.3px #fff)"><use href="#i_fire"/></svg></div>
<div class="abs" style="left:366.36px;top:540px;width:28.2px;height:40.5px;background:#fff"></div>
<div class="abs" style="left:367.36px;top:566px;width:26.2px;height:14px;background:#f2f2f2"></div>
<div class="abs" style="left:367.56px;top:540.5px;width:25.5px;height:24.5px;background:#29d763;border:1px solid #111"><svg width="23.5" height="22.5" viewBox="0 0 27 27" preserveAspectRatio="none" style="display:block;filter:drop-shadow(0 0 0.5px #fff) drop-shadow(0 0 0.3px #fff)"><use href="#i_coast"/></svg></div>
<div class="abs" style="left:396.53px;top:540px;width:28.2px;height:40.5px;background:#fff"></div>
<div class="abs" style="left:397.53px;top:566px;width:26.2px;height:14px;background:#f2f2f2"></div>
<div class="abs" style="left:397.73px;top:540.5px;width:25.5px;height:24.5px;background:#29d763;border:1px solid #111"><svg width="23.5" height="22.5" viewBox="0 0 27 27" preserveAspectRatio="none" style="display:block;filter:drop-shadow(0 0 0.5px #fff) drop-shadow(0 0 0.3px #fff)"><use href="#i_aval"/></svg></div>
<div class="abs" style="left:610.8px;top:584px;width:25.8px;height:21.7px;background:#ffff00"></div>
<div class="abs" style="left:610.8px;top:605.7px;width:25.8px;height:18.5px;background:#5096b4"></div>
<div class="t" style="left:610.8px;top:607.5px;width:25.8px;text-align:center;font-size:15.75px;font-weight:bold;font-style:italic;color:#fff">po</div>
<div class="abs" style="left:637.55px;top:584px;width:25.8px;height:21.7px;background:#ffff00"></div>
<div class="t" style="left:637.55px;top:607.5px;width:25.8px;text-align:center;font-size:15.75px;color:#333">to</div>
<div class="abs" style="left:664.3px;top:584px;width:25.8px;height:21.7px;background:#ffff00"></div>
<div class="t" style="left:664.3px;top:607.5px;width:25.8px;text-align:center;font-size:15.75px;color:#333">sr</div>
<div class="abs" style="left:691.05px;top:584px;width:25.8px;height:21.7px;background:#ffff00"></div>
<div class="t" style="left:691.05px;top:607.5px;width:25.8px;text-align:center;font-size:15.75px;color:#333">če</div>
<div class="abs" style="left:717.8px;top:584px;width:25.8px;height:21.7px;background:#29d763"></div>
<div class="t" style="left:717.8px;top:607.5px;width:25.8px;text-align:center;font-size:15.75px;color:#333">pe</div>
<div class="abs" style="left:24px;top:644.5px;width:725.5px;height:207px;background:#f2f2f2;border:1px solid #d4d4d4;border-top:2px solid #dcdcdc"></div>
<div class="abs" style="left:25px;top:647px;width:723.6px;height:49px;background:#5096b4"></div>
<div class="t" style="left:69.8px;top:651px;font-size:14px;font-weight:bold;font-style:italic;color:#fff">VSA OPOZORILA - danes - PONEDELJEK</div>
<div class="t" style="left:177px;top:674px;font-size:14px;font-weight:bold;font-style:italic;color:#fff">Slovenija</div>
<div class="t" style="left:527px;top:662px;font-size:14px;font-weight:bold;font-style:italic;color:#fff">v teku dneva</div>
<div class="t" style="left:171.6px;top:699px;font-size:13px;color:#1f4e79">Opis in nasveti</div>
<div class="t" style="left:387.7px;top:700px;width:30px;text-align:center;font-size:12px;color:#666">00</div>
<div class="abs" style="left:402.2px;top:716px;width:1px;height:4px;background:#7d9fbd"></div>
<div class="t" style="left:427.5px;top:700px;width:30px;text-align:center;font-size:12px;color:#666">03</div>
<div class="abs" style="left:442px;top:716px;width:1px;height:4px;background:#7d9fbd"></div>
<div class="t" style="left:468.2px;top:700px;width:30px;text-align:center;font-size:12px;color:#666">06</div>
<div class="abs" style="left:482.7px;top:716px;width:1px;height:4px;background:#7d9fbd"></div>
<div class="t" style="left:516.4px;top:700px;width:30px;text-align:center;font-size:12px;color:#666">09</div>
<div class="abs" style="left:530.9px;top:716px;width:1px;height:4px;background:#7d9fbd"></div>
<div class="t" style="left:557px;top:700px;width:30px;text-align:center;font-size:12px;color:#666">12</div>
<div class="abs" style="left:571.5px;top:716px;width:1px;height:4px;background:#7d9fbd"></div>
<div class="t" style="left:597.5px;top:700px;width:30px;text-align:center;font-size:12px;color:#666">15</div>
<div class="abs" style="left:612px;top:716px;width:1px;height:4px;background:#7d9fbd"></div>
<div class="t" style="left:638.5px;top:700px;width:30px;text-align:center;font-size:12px;color:#666">18</div>
<div class="abs" style="left:653px;top:716px;width:1px;height:4px;background:#7d9fbd"></div>
<div class="t" style="left:678.8px;top:700px;width:30px;text-align:center;font-size:12px;color:#666">21</div>
<div class="abs" style="left:693.3px;top:716px;width:1px;height:4px;background:#7d9fbd"></div>
<div class="t" style="left:718.8px;top:700px;width:30px;text-align:center;font-size:12px;color:#666">24</div>
<div class="abs" style="left:733.3px;top:716px;width:1px;height:4px;background:#7d9fbd"></div>
<div class="abs" style="left:25px;top:720.2px;width:723.6px;height:2px;background:#a9c0d3"></div>
<div class="t" style="left:39px;top:726.1px;font-size:14px;font-weight:bold;color:#5a5a5a">Slovenija - severozahod</div>
<div class="abs" style="left:402.7px;top:722.5px;width:156px;height:24px;background:#29d763"></div>
<div class="abs" style="left:558.7px;top:722.5px;width:108.3px;height:24px;background:#ffff00"></div>
<div class="abs" style="left:667px;top:722.5px;width:66.8px;height:24px;background:#29d763"></div>
<div class="abs" style="left:367.6px;top:722.8px;width:21.5px;height:21.5px;background:#ffff00;border:1.5px solid #111"><svg width="18.5" height="18.5" viewBox="0 0 27 27" style="display:block;filter:drop-shadow(0 0 0.4px #fff)"><use href="#i_bolt"/></svg></div>
<div class="abs" style="left:25px;top:745.9px;width:723.6px;height:2px;background:#a9c0d3"></div>
<div class="t" style="left:39px;top:751.8px;font-size:14px;font-weight:bold;color:#5a5a5a">Slovenija - jugozahod</div>
<div class="abs" style="left:402.7px;top:748.2px;width:331.1px;height:24px;background:#ffff00"></div>
<div class="abs" style="left:367.6px;top:748.5px;width:21.5px;height:21.5px;background:#ffff00;border:1.5px solid #111"><svg width="18.5" height="18.5" viewBox="0 0 27 27" style="display:block;filter:drop-shadow(0 0 0.4px #fff)"><use href="#i_fire"/></svg></div>
<div class="abs" style="left:346.8px;top:748.5px;width:21.5px;height:21.5px;background:#ffff00;border:1.5px solid #111"><svg width="18.5" height="18.5" viewBox="0 0 27 27" style="display:block;filter:drop-shadow(0 0 0.4px #fff)"><use href="#i_thigh"/></svg></div>
<div class="abs" style="left:326px;top:748.5px;width:21.5px;height:21.5px;background:#ffff00;border:1.5px solid #111"><svg width="18.5" height="18.5" viewBox="0 0 27 27" style="display:block;filter:drop-shadow(0 0 0.4px #fff)"><use href="#i_bolt"/></svg></div>
<div class="abs" style="left:25px;top:771.6px;width:723.6px;height:2px;background:#a9c0d3"></div>
<div class="t" style="left:39px;top:777.5px;font-size:14px;font-weight:bold;color:#5a5a5a">Slovenija - osrednja</div>
<div class="abs" style="left:402.7px;top:773.9px;width:156px;height:24px;background:#29d763"></div>
<div class="abs" style="left:558.7px;top:773.9px;width:108.3px;height:24px;background:#ffff00"></div>
<div class="abs" style="left:667px;top:773.9px;width:66.8px;height:24px;background:#29d763"></div>
<div class="abs" style="left:367.6px;top:774.2px;width:21.5px;height:21.5px;background:#ffff00;border:1.5px solid #111"><svg width="18.5" height="18.5" viewBox="0 0 27 27" style="display:block;filter:drop-shadow(0 0 0.4px #fff)"><use href="#i_bolt"/></svg></div>
<div class="abs" style="left:25px;top:797.3px;width:723.6px;height:2px;background:#a9c0d3"></div>
<div class="t" style="left:39px;top:803.2px;font-size:14px;font-weight:bold;color:#5a5a5a">Slovenija - jugovzhod</div>
<div class="abs" style="left:402.7px;top:799.6px;width:156px;height:24px;background:#29d763"></div>
<div class="abs" style="left:558.7px;top:799.6px;width:162.7px;height:24px;background:#ffff00"></div>
<div class="abs" style="left:721.4px;top:799.6px;width:12.4px;height:24px;background:#29d763"></div>
<div class="abs" style="left:367.6px;top:799.9px;width:21.5px;height:21.5px;background:#ffff00;border:1.5px solid #111"><svg width="18.5" height="18.5" viewBox="0 0 27 27" style="display:block;filter:drop-shadow(0 0 0.4px #fff)"><use href="#i_bolt"/></svg></div>
<div class="abs" style="left:25px;top:823px;width:723.6px;height:2px;background:#a9c0d3"></div>
<div class="t" style="left:39px;top:828.9px;font-size:14px;font-weight:bold;color:#5a5a5a">Slovenija - severovzhod</div>
<div class="abs" style="left:402.7px;top:825.3px;width:156px;height:24px;background:#29d763"></div>
<div class="abs" style="left:558.7px;top:825.3px;width:175.1px;height:24px;background:#ffff00"></div>
<div class="abs" style="left:367.6px;top:825.6px;width:21.5px;height:21.5px;background:#ffff00;border:1.5px solid #111"><svg width="18.5" height="18.5" viewBox="0 0 27 27" style="display:block;filter:drop-shadow(0 0 0.4px #fff)"><use href="#i_bolt"/></svg></div>
<div class="abs" style="left:25px;top:849px;width:723.6px;height:2px;background:#a9c0d3"></div>
<div class="abs" style="left:442px;top:722px;width:1px;height:127px;background:rgba(255,255,255,0.55)"></div>
<div class="abs" style="left:482.7px;top:722px;width:1px;height:127px;background:rgba(255,255,255,0.55)"></div>
<div class="abs" style="left:530.9px;top:722px;width:1px;height:127px;background:rgba(255,255,255,0.55)"></div>
<div class="abs" style="left:571.5px;top:722px;width:1px;height:127px;background:rgba(255,255,255,0.55)"></div>
<div class="abs" style="left:612px;top:722px;width:1px;height:127px;background:rgba(255,255,255,0.55)"></div>
<div class="abs" style="left:653px;top:722px;width:1px;height:127px;background:rgba(255,255,255,0.55)"></div>
<div class="abs" style="left:693.3px;top:722px;width:1px;height:127px;background:rgba(255,255,255,0.55)"></div>
<div class="abs" style="left:497.6px;top:722px;width:2.2px;height:127px;background:#000"></div>
<div class="abs" style="left:516.1px;top:722px;width:2.2px;height:127px;background:#000"></div>
<svg class="abs" style="left:0;top:0;width:940px;height:859px;overflow:visible" viewBox="0 0 940 859"><text x="30.60" y="26.30" font-family='"Liberation Sans", sans-serif' font-size="21.50" font-weight="bold" font-style="normal" fill="#fff" stroke="#fff" stroke-width="0.6" textLength="94.65" lengthAdjust="spacingAndGlyphs" style="white-space:pre">Opozorila</text><text x="419.50" y="28.20" font-family='"Liberation Mono", monospace' font-size="15.00" font-weight="normal" font-style="italic" fill="#f0f6f8" textLength="322.91" lengthAdjust="spacingAndGlyphs" style="white-space:pre">izdano: Nedelja, 21.7.2024 06:59 CET</text><text x="767.00" y="28.60" font-family='"Liberation Sans", sans-serif' font-size="17.00" font-weight="bold" font-style="normal" fill="#fff" stroke="#fff" stroke-width="0.5" textLength="53.64" lengthAdjust="spacingAndGlyphs" style="white-space:pre">Evropa</text><text x="48.30" y="180.30" font-family='"Liberation Sans", sans-serif' font-size="16.50" font-weight="bold" font-style="normal" fill="#1b4f7c" textLength="132.68" lengthAdjust="spacingAndGlyphs" style="white-space:pre">VSA OPOZORILA</text><text x="228.30" y="180.30" font-family='"Liberation Sans", sans-serif' font-size="16.50" font-weight="bold" font-style="normal" fill="#1b4f7c" textLength="45.89" lengthAdjust="spacingAndGlyphs" style="white-space:pre">danes</text><text x="325.70" y="180.30" font-family='"Liberation Sans", sans-serif' font-size="16.50" font-weight="bold" font-style="normal" fill="#1b4f7c" textLength="109.21" lengthAdjust="spacingAndGlyphs" style="white-space:pre">PONEDELJEK</text><text x="486.80" y="180.30" font-family='"Liberation Sans", sans-serif' font-size="16.50" font-weight="bold" font-style="italic" fill="#1b4f7c" textLength="70.00" lengthAdjust="spacingAndGlyphs" style="white-space:pre">Slovenija</text><text x="200.60" y="180.30" font-family='"Liberation Sans", sans-serif' font-size="16.50" font-weight="bold" font-style="normal" fill="#1b4f7c" textLength="4.20" lengthAdjust="spacingAndGlyphs" style="white-space:pre">-</text><text x="298.20" y="180.30" font-family='"Liberation Sans", sans-serif' font-size="16.50" font-weight="bold" font-style="normal" fill="#1b4f7c" textLength="4.20" lengthAdjust="spacingAndGlyphs" style="white-space:pre">-</text><text x="458.00" y="180.30" font-family='"Liberation Sans", sans-serif' font-size="16.50" font-weight="bold" font-style="normal" fill="#1b4f7c" textLength="4.20" lengthAdjust="spacingAndGlyphs" style="white-space:pre">-</text><text x="99.80" y="216.80" font-family='"Liberation Sans", sans-serif' font-size="15.50" font-weight="bold" font-style="normal" fill="#383838" textLength="20.60" lengthAdjust="spacingAndGlyphs" style="white-space:pre">22.</text><text x="129.50" y="216.80" font-family='"Liberation Sans", sans-serif' font-size="15.50" font-weight="bold" font-style="normal" fill="#383838" textLength="50.31" lengthAdjust="spacingAndGlyphs" style="white-space:pre">7.2024</text><text x="190.70" y="216.80" font-family='"Liberation Sans", sans-serif' font-size="15.50" font-weight="bold" font-style="normal" fill="#383838" textLength="27.01" lengthAdjust="spacingAndGlyphs" style="white-space:pre">07h</text><text x="229.00" y="216.80" font-family='"Liberation Sans", sans-serif' font-size="15.50" font-weight="bold" font-style="normal" fill="#383838" textLength="11.13" lengthAdjust="spacingAndGlyphs" style="white-space:pre">--</text><text x="250.70" y="216.80" font-family='"Liberation Sans", sans-serif' font-size="15.50" font-weight="bold" font-style="normal" fill="#383838" textLength="21.50" lengthAdjust="spacingAndGlyphs" style="white-space:pre">23.</text><text x="280.30" y="216.80" font-family='"Liberation Sans", sans-serif' font-size="15.50" font-weight="bold" font-style="normal" fill="#383838" textLength="50.41" lengthAdjust="spacingAndGlyphs" style="white-space:pre">7.2024</text><text x="341.60" y="216.80" font-family='"Liberation Sans", sans-serif' font-size="15.50" font-weight="bold" font-style="normal" fill="#383838" textLength="27.01" lengthAdjust="spacingAndGlyphs" style="white-space:pre">00h</text><text x="394.20" y="216.80" font-family='"Liberation Sans", sans-serif' font-size="15.50" font-weight="bold" font-style="normal" fill="#383838" textLength="38.92" lengthAdjust="spacingAndGlyphs" style="white-space:pre">(CET)</text><text x="455.60" y="498.00" font-family='"Liberation Sans", sans-serif' font-size="11.00" font-weight="normal" font-style="normal" fill="#444" textLength="67.59" lengthAdjust="spacingAndGlyphs" style="white-space:pre">ARSO vreme</text><text x="433.20" y="515.20" font-family='"Liberation Sans", sans-serif' font-size="11.00" font-weight="normal" font-style="normal" fill="#444" textLength="121.59" lengthAdjust="spacingAndGlyphs" style="white-space:pre">22. 7.2024  07:01 CET</text></svg>
</body></html>
